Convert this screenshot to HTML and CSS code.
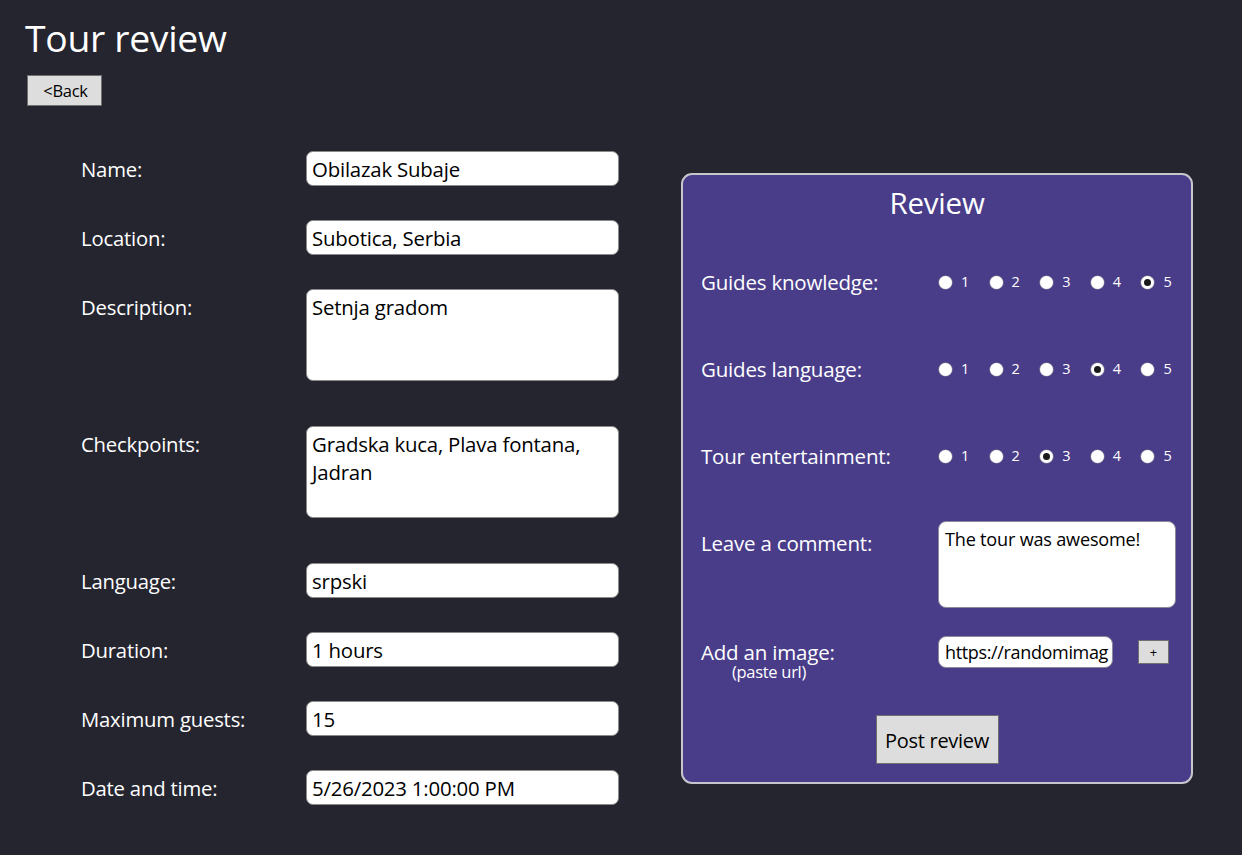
FILE: index.html
```html
<!DOCTYPE html>
<html>
<head>
<meta charset="utf-8">
<link rel="stylesheet" href="styles.css">
</head>
<body>
<div class="page">
  <h1 class="title">Tour review</h1>
  <button class="btn back">&lt;Back</button>
  <div class="main">
    <div class="form">
      <div class="row"><div class="label">Name:</div><div class="box">Obilazak Subaje</div></div>
      <div class="row"><div class="label">Location:</div><div class="box">Subotica, Serbia</div></div>
      <div class="row multi"><div class="label">Description:</div><div class="box tall">Setnja gradom</div></div>
      <div class="row multi"><div class="label">Checkpoints:</div><div class="box tall">Gradska kuca, Plava fontana,<br>Jadran</div></div>
      <div class="row"><div class="label">Language:</div><div class="box">srpski</div></div>
      <div class="row"><div class="label">Duration:</div><div class="box">1 hours</div></div>
      <div class="row"><div class="label">Maximum guests:</div><div class="box">15</div></div>
      <div class="row last"><div class="label">Date and time:</div><div class="box">5/26/2023 1:00:00 PM</div></div>
    </div>
    <div class="panel">
      <div class="panel-title">Review</div>
      <div class="prow rate first">
        <div class="plabel">Guides knowledge:</div>
        <div class="radios">
          <span class="radio"><span class="dot"></span>1</span>
          <span class="radio"><span class="dot"></span>2</span>
          <span class="radio"><span class="dot"></span>3</span>
          <span class="radio"><span class="dot"></span>4</span>
          <span class="radio"><span class="dot on"></span>5</span>
        </div>
      </div>
      <div class="prow rate">
        <div class="plabel">Guides language:</div>
        <div class="radios">
          <span class="radio"><span class="dot"></span>1</span>
          <span class="radio"><span class="dot"></span>2</span>
          <span class="radio"><span class="dot"></span>3</span>
          <span class="radio"><span class="dot on"></span>4</span>
          <span class="radio"><span class="dot"></span>5</span>
        </div>
      </div>
      <div class="prow rate">
        <div class="plabel">Tour entertainment:</div>
        <div class="radios">
          <span class="radio"><span class="dot"></span>1</span>
          <span class="radio"><span class="dot"></span>2</span>
          <span class="radio"><span class="dot on"></span>3</span>
          <span class="radio"><span class="dot"></span>4</span>
          <span class="radio"><span class="dot"></span>5</span>
        </div>
      </div>
      <div class="prow comment">
        <div class="plabel">Leave a comment:</div>
        <div class="cbox">The tour was awesome!</div>
      </div>
      <div class="prow image">
        <div class="plabel img"><span class="main-l">Add an image:</span><span class="sub">(paste url)</span></div>
        <div class="ubox">https://randomimag</div>
        <button class="btn plus">+</button>
      </div>
      <div class="post-wrap"><button class="btn post">Post review</button></div>
    </div>
  </div>
</div>
</body>
</html>
```
FILE: styles.css
```css
html, body {
  margin: 0;
  padding: 0;
  background: #25252f;
}
body {
  font-family: "Open Sans", "Noto Sans", sans-serif;
  color: #ffffff;
}
.page {
  width: 1242px;
  height: 855px;
  box-sizing: border-box;
  padding: 12px 0 0 0;
}
.title {
  margin: 0 0 0 25px;
  font-weight: 400;
  font-size: 37.3px;
  line-height: 52px;
  letter-spacing: -0.3px;
}
.btn {
  font-family: "Open Sans", "Noto Sans", sans-serif;
  background: #dddddd;
  border: 1px solid #707070;
  color: #000;
  padding: 0;
  border-radius: 0;
}
.back {
  display: block;
  margin: 11px 0 0 27px;
  width: 75px;
  height: 31px;
  font-size: 16.5px;
  letter-spacing: -0.3px;
  padding-left: 2px;
}
.main {
  display: flex;
  align-items: flex-start;
}
.form {
  margin: 45px 0 0 81px;
  width: 538px;
}
.row {
  display: flex;
  margin-bottom: 34px;
}
.row.multi { margin-bottom: 45px; }
.row.last { margin-bottom: 0; }
.label {
  width: 225px;
  font-size: 20.3px;
  line-height: 28px;
  padding-top: 4px;
  letter-spacing: -0.2px;
}
.box {
  width: 313px;
  height: 35px;
  box-sizing: border-box;
  background: #fff;
  border: 1px solid #8a8a8a;
  border-radius: 7px;
  color: #000;
  font-size: 20.4px;
  line-height: 28px;
  padding: 3px 5px;
  letter-spacing: -0.2px;
  white-space: nowrap;
  overflow: hidden;
}
.box.tall { height: 92px; }
.panel {
  margin: 67px 0 0 62px;
  width: 512px;
  height: 611px;
  box-sizing: border-box;
  background: #493d8a;
  border: 2px solid #c6c6cc;
  border-radius: 11px;
  padding: 0 0 0 18px;
}
.panel-title {
  text-align: center;
  font-size: 29.5px;
  line-height: 36px;
  margin: 10px 0 0 -18px;
  letter-spacing: -0.2px;
}
.prow {
  display: flex;
  align-items: center;
}
.plabel {
  width: 237px;
  font-size: 20.5px;
  line-height: 26px;
  letter-spacing: -0.2px;
}
.rate { height: 26px; }
.rate.first { margin-top: 48px; }
.rate + .rate { margin-top: 61px; }
.radios {
  display: flex;
  font-size: 14.5px;
}
.radio {
  display: flex;
  align-items: center;
  width: 50.6px;
  line-height: 18px;
}
.dot {
  width: 13px;
  height: 13px;
  border-radius: 50%;
  background: #fff;
  box-shadow: 0 0 0 0.6px #8a8a9a;
  margin: 0 9px 0 1px;
  box-sizing: border-box;
  position: relative;
}
.dot.on::after {
  content: "";
  position: absolute;
  left: 3px;
  top: 3px;
  width: 7px;
  height: 7px;
  border-radius: 50%;
  background: #1a1a1a;
}
.comment {
  align-items: flex-start;
  margin-top: 52px;
}
.comment .plabel { padding-top: 9px; }
.cbox {
  width: 238px;
  height: 87px;
  box-sizing: border-box;
  background: #fff;
  border: 1px solid #8a8a9a;
  border-radius: 8px;
  color: #000;
  font-size: 18.1px;
  line-height: 24px;
  padding: 5px 6px 3px;
  letter-spacing: -0.2px;
}
.image {
  margin-top: 28px;
  align-items: flex-start;
}
.plabel.img {
  display: flex;
  flex-direction: column;
  padding-top: 6px;
}
.main-l {
  line-height: 21px;
}
.sub {
  font-size: 16.5px;
  line-height: 18px;
  margin-top: 0;
  padding-left: 31px;
  letter-spacing: -0.3px;
}
.ubox {
  width: 175px;
  height: 32px;
  box-sizing: border-box;
  background: #fff;
  border: 1px solid #8a8a9a;
  border-radius: 8px;
  color: #000;
  font-size: 18px;
  line-height: 28px;
  padding: 1px 0 1px 6px;
  white-space: nowrap;
  overflow: hidden;
  letter-spacing: -0.35px;
}
.plus {
  margin: 4px 0 0 25px;
  width: 31px;
  height: 24px;
  font-size: 13px;
  line-height: 20px;
}
.post-wrap {
  display: flex;
  justify-content: center;
  margin: 34px 0 0 -18px;
}
.post {
  width: 123px;
  height: 49px;
  font-size: 20px;
  letter-spacing: -0.3px;
  padding-top: 2px;
}
```
